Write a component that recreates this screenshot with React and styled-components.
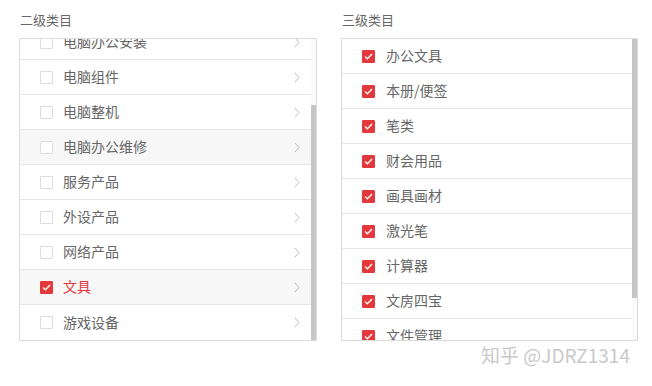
import React, { useEffect, useRef } from "react";
import styled, { createGlobalStyle } from "styled-components";

const GlobalStyle = createGlobalStyle`
  html, body {
    margin: 0;
    padding: 0;
    background: #fff;
  }
  body {
    font-family: "Noto Sans CJK SC", "Noto Sans", sans-serif;
  }
`;

const ROW_H = 35;
const VIEW_H = 301;

const Page = styled.div`
  position: relative;
  width: 652px;
  height: 386px;
  box-sizing: border-box;
  padding: 11px 0 0 19px;
  display: flex;
  gap: 24px;
`;

const Column = styled.div`
  display: flex;
  flex-direction: column;
  width: ${p => p.width}px;
`;

const Title = styled.div`
  height: 18px;
  line-height: 18px;
  margin: 0 0 9px 1px;
  font-size: 13px;
  color: #666;
`;

const Panel = styled.div`
  height: ${VIEW_H + 2}px;
  box-sizing: border-box;
  border: 1px solid #dcdcdc;
  display: flex;
  background: #fff;
`;

const List = styled.div`
  flex: 1;
  height: ${VIEW_H}px;
  overflow: hidden;
`;

const Track = styled.div`
  width: 5px;
  flex: none;
  background: #fafafa;
`;

const Thumb = styled.div`
  width: 5px;
  background: #c6c6c6;
`;

const Row = styled.div`
  height: ${ROW_H}px;
  box-sizing: border-box;
  border-bottom: 1px solid #e6e6e6;
  display: flex;
  align-items: center;
  padding: 0 11px 0 ${p => p.indent}px;
  background: ${p => (p.active ? "#f7f7f7" : "#fff")};
  &:last-child {
    border-bottom: none;
  }
`;

const Box = styled.span`
  width: 13px;
  height: 13px;
  box-sizing: border-box;
  flex: none;
  border: 1px solid ${p => (p.checked ? "#e4393c" : "#dcdcdc")};
  background: ${p => (p.checked ? "#e4393c" : "#fff")};
  border-radius: 1px;
  display: flex;
  align-items: center;
  justify-content: center;
  margin-right: ${p => p.gap}px;
`;

const Label = styled.span`
  flex: 1;
  font-size: 14px;
  color: ${p => (p.red ? "#e4393c" : "#666")};
  white-space: nowrap;
  margin-top: -2px;
`;

const Watermark = styled.div`
  position: absolute;
  left: 481px;
  top: 341px;
  font-size: 19px;
  line-height: 28px;
  color: #c9c9c9;
  white-space: nowrap;
`;

const Check = () => (
  <svg width="9" height="7" viewBox="0 0 9 7">
    <polyline points="1,3.6 3.4,5.8 8,1" fill="none" stroke="#fff" strokeWidth="1.3" />
  </svg>
);

const Chevron = () => (
  <svg width="6" height="11" viewBox="0 0 6 11">
    <polyline points="0.8,0.8 5,5.5 0.8,10.2" fill="none" stroke="#bdbdbd" strokeWidth="1" />
  </svg>
);

const second = [
  { name: "办公设备" },
  { name: "电脑配件" },
  { name: "电脑办公安装" },
  { name: "电脑组件" },
  { name: "电脑整机" },
  { name: "电脑办公维修", active: true },
  { name: "服务产品" },
  { name: "外设产品" },
  { name: "网络产品" },
  { name: "文具", active: true, checked: true },
  { name: "游戏设备" },
];

const third = [
  "办公文具",
  "本册/便签",
  "笔类",
  "财会用品",
  "画具画材",
  "激光笔",
  "计算器",
  "文房四宝",
  "文件管理",
  "收纳用品",
];

// scroll list + drawn scrollbar, thumb size from content height
const ScrollPanel = ({ count, atBottom, children }) => {
  const ref = useRef(null);
  const content = count * ROW_H;
  const max = Math.max(content - VIEW_H, 0);
  const top = atBottom ? max : 0;
  const thumbH = Math.round((VIEW_H * VIEW_H) / content);
  const thumbTop = max ? Math.round(((VIEW_H - thumbH) * top) / max) : 0;

  useEffect(() => {
    if (ref.current) ref.current.scrollTop = top;
  }, [top]);

  return (
    <Panel>
      <List ref={ref}>{children}</List>
      <Track>
        <Thumb style={{ height: thumbH, marginTop: thumbTop }} />
      </Track>
    </Panel>
  );
};

export default function App() {
  return (
    <>
      <GlobalStyle />
      <Page>
        <Column width={298}>
          <Title>二级类目</Title>
          <ScrollPanel count={second.length} atBottom>
            {second.map(item => (
              <Row key={item.name} indent={20} active={item.active}>
                <Box checked={item.checked} gap={10}>
                  {item.checked && <Check />}
                </Box>
                <Label red={item.checked}>{item.name}</Label>
                <Chevron />
              </Row>
            ))}
          </ScrollPanel>
        </Column>
        <Column width={297}>
          <Title>三级类目</Title>
          <ScrollPanel count={third.length}>
            {third.map(name => (
              <Row key={name} indent={20}>
                <Box checked gap={11}>
                  <Check />
                </Box>
                <Label>{name}</Label>
              </Row>
            ))}
          </ScrollPanel>
        </Column>
        <Watermark>知乎 @JDRZ1314</Watermark>
      </Page>
    </>
  );
}
